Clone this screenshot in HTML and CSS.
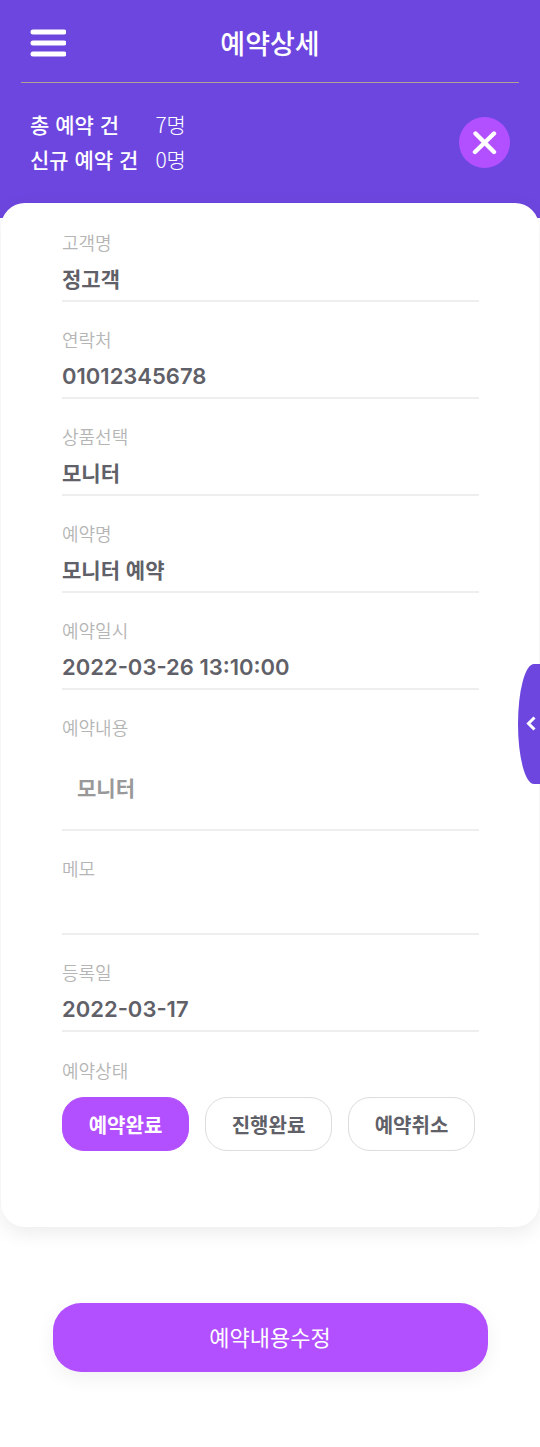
FILE: index.html
```html
<!DOCTYPE html>
<html lang="ko">
  <head>
    <meta charset="UTF-8" />
    <meta name="viewport" content="width=device-width, initial-scale=1.0" />
    <title>예약상세</title>
    <link rel="stylesheet" href="styles.css">
  </head>
  <body>
    <header>
      <div class="top-bar">
        <button type="button" class="menu-toggle" aria-label="메뉴">
          <svg width="36" height="28" viewBox="0 0 36 28" stroke="#fff" stroke-width="5" stroke-linecap="round">
            <path d="M3 3h31M3 14h31M3 25h31" />
          </svg>
        </button>
        <h1>예약상세</h1>
      </div>
      <div class="summary">
        <dl>
          <dt>총 예약 건</dt>
          <dd>7명</dd>
          <dt>신규 예약 건</dt>
          <dd>0명</dd>
        </dl>
        <button type="button" class="close-btn" aria-label="닫기">
          <svg width="25" height="25" viewBox="0 0 25 25" stroke="#fff" stroke-width="4.4" stroke-linecap="round">
            <path d="M3.5 3.5l18.5 18.5M22 3.5L3 22" />
          </svg>
        </button>
      </div>
    </header>

    <form id="reserve-form">
      <main class="card">
        <div class="field">
          <label for="customer">고객명</label>
          <input type="text" id="customer" value="정고객" readonly />
        </div>
        <div class="field">
          <label for="phone">연락처</label>
          <input type="tel" id="phone" class="number" value="01012345678" readonly />
        </div>
        <div class="field">
          <label for="product">상품선택</label>
          <input type="text" id="product" value="모니터" readonly />
        </div>
        <div class="field">
          <label for="reserve-name">예약명</label>
          <input type="text" id="reserve-name" value="모니터 예약" readonly />
        </div>
        <div class="field">
          <label for="reserve-date">예약일시</label>
          <input type="text" id="reserve-date" class="number" value="2022-03-26 13:10:00" readonly />
        </div>
        <div class="field">
          <label for="content">예약내용</label>
          <textarea id="content" class="content" readonly>모니터</textarea>
        </div>
        <div class="field">
          <label for="memo">메모</label>
          <textarea id="memo" class="memo" readonly></textarea>
        </div>
        <div class="field">
          <label for="created">등록일</label>
          <input type="text" id="created" class="number" value="2022-03-17" readonly />
        </div>
        <div class="status">
          <span id="status-label">예약상태</span>
          <div class="status-list" role="group" aria-labelledby="status-label">
            <button type="button" class="active" aria-pressed="true">예약완료</button>
            <button type="button" aria-pressed="false">진행완료</button>
            <button type="button" aria-pressed="false">예약취소</button>
          </div>
        </div>
      </main>
      <button type="submit" class="submit-btn">예약내용수정</button>
    </form>

    <!-- Side panel handle -->
    <button type="button" class="side-toggle" aria-label="패널 열기">
      <svg width="10" height="15" viewBox="0 0 10 15" fill="none" stroke="#fff" stroke-width="3">
        <path d="M8.5 1.5L2.5 7.5l6 6" />
      </svg>
    </button>
  </body>
</html>
```
FILE: styles.css
```css
/* Reset */
* {
  margin: 0;
  padding: 0;
  box-sizing: border-box;
}

body {
  background-color: #fff;
  color: #5f6068;
  font-family: "Noto Sans CJK KR", sans-serif;
}

button,
input,
textarea {
  font-family: inherit;
  border: none;
  background: none;
  outline: none;
}

button {
  cursor: pointer;
}

svg {
  display: block;
}

/* Header */
header {
  background-color: #6d46df;
  color: #fff;
  padding: 0 21px 41px;
}

.top-bar {
  display: grid;
  grid-template-columns: 36px 1fr 36px;
  align-items: center;
  height: 83px;
  padding: 4px 9px 0;
  border-bottom: 1px solid #aaa593;
}

.top-bar h1 {
  font-size: 27px;
  font-weight: 500;
  line-height: 40px;
  text-align: center;
}

.summary {
  display: flex;
  justify-content: space-between;
  align-items: center;
  padding: 24px 9px 0;
}

.summary dl {
  display: grid;
  grid-template-columns: auto auto;
  column-gap: 17px;
  font-size: 21px;
  line-height: 35px;
}

.summary dt {
  font-weight: 500;
}

.summary dd {
  font-weight: 300;
}

.close-btn {
  display: flex;
  justify-content: center;
  align-items: center;
  width: 51px;
  height: 51px;
  border-radius: 50%;
  background-color: #b250ff;
}

/* Detail card */
.card {
  margin: -15px 1px 0;
  padding: 2px 60px 76px 61px;
  border-radius: 24px;
  background-color: #fff;
  box-shadow: 0 6px 20px rgba(0, 0, 0, 0.08);
}

.field {
  padding-top: 23px;
  border-bottom: 2px solid #eee;
}

.field label,
.status span {
  display: block;
  color: #b5b5b5;
  font-size: 18px;
  font-weight: 350;
  line-height: 28px;
}

.field input,
.field textarea {
  display: block;
  width: 100%;
  color: #5f6068;
  font-size: 21px;
  font-weight: 700;
}

.field input {
  height: 44px;
}

.field .number {
  padding-top: 2px;
  font-family: Inter, "Noto Sans CJK KR", sans-serif;
  font-size: 22px;
  font-weight: 600;
}

.field textarea {
  padding: 31px 15px 27px;
  line-height: 30px;
  resize: none;
  overflow: hidden;
}

.field .content {
  height: 88px;
  color: #999;
}

.field .memo {
  height: 51px;
  padding: 10px 15px;
}

/* Status buttons */
.status {
  padding-top: 24px;
}

.status-list {
  display: flex;
  gap: 16px;
  padding: 13px 4px 0 0;
}

.status-list button {
  flex: 1;
  height: 54px;
  border: 1px solid #ddd;
  border-radius: 22px;
  color: #5f6068;
  font-size: 20px;
  font-weight: 700;
}

.status-list .active {
  border-color: #b250ff;
  background-color: #b250ff;
  color: #fff;
}

.submit-btn {
  display: block;
  width: calc(100% - 105px);
  height: 69px;
  margin: 76px auto 75px;
  padding-bottom: 4px;
  border-radius: 28px;
  background-color: #b250ff;
  color: #fff;
  font-size: 22px;
  font-weight: 400;
  box-shadow: 0 6px 20px rgba(0, 0, 0, 0.06);
}

.side-toggle {
  position: fixed;
  top: 50%;
  right: 0;
  display: flex;
  justify-content: flex-end;
  align-items: center;
  width: 22px;
  height: 120px;
  padding-right: 4px;
  border-radius: 16px 0 0 16px / 60px 0 0 60px;
  background-color: #6d46df;
  transform: translateY(-50%);
}
```
